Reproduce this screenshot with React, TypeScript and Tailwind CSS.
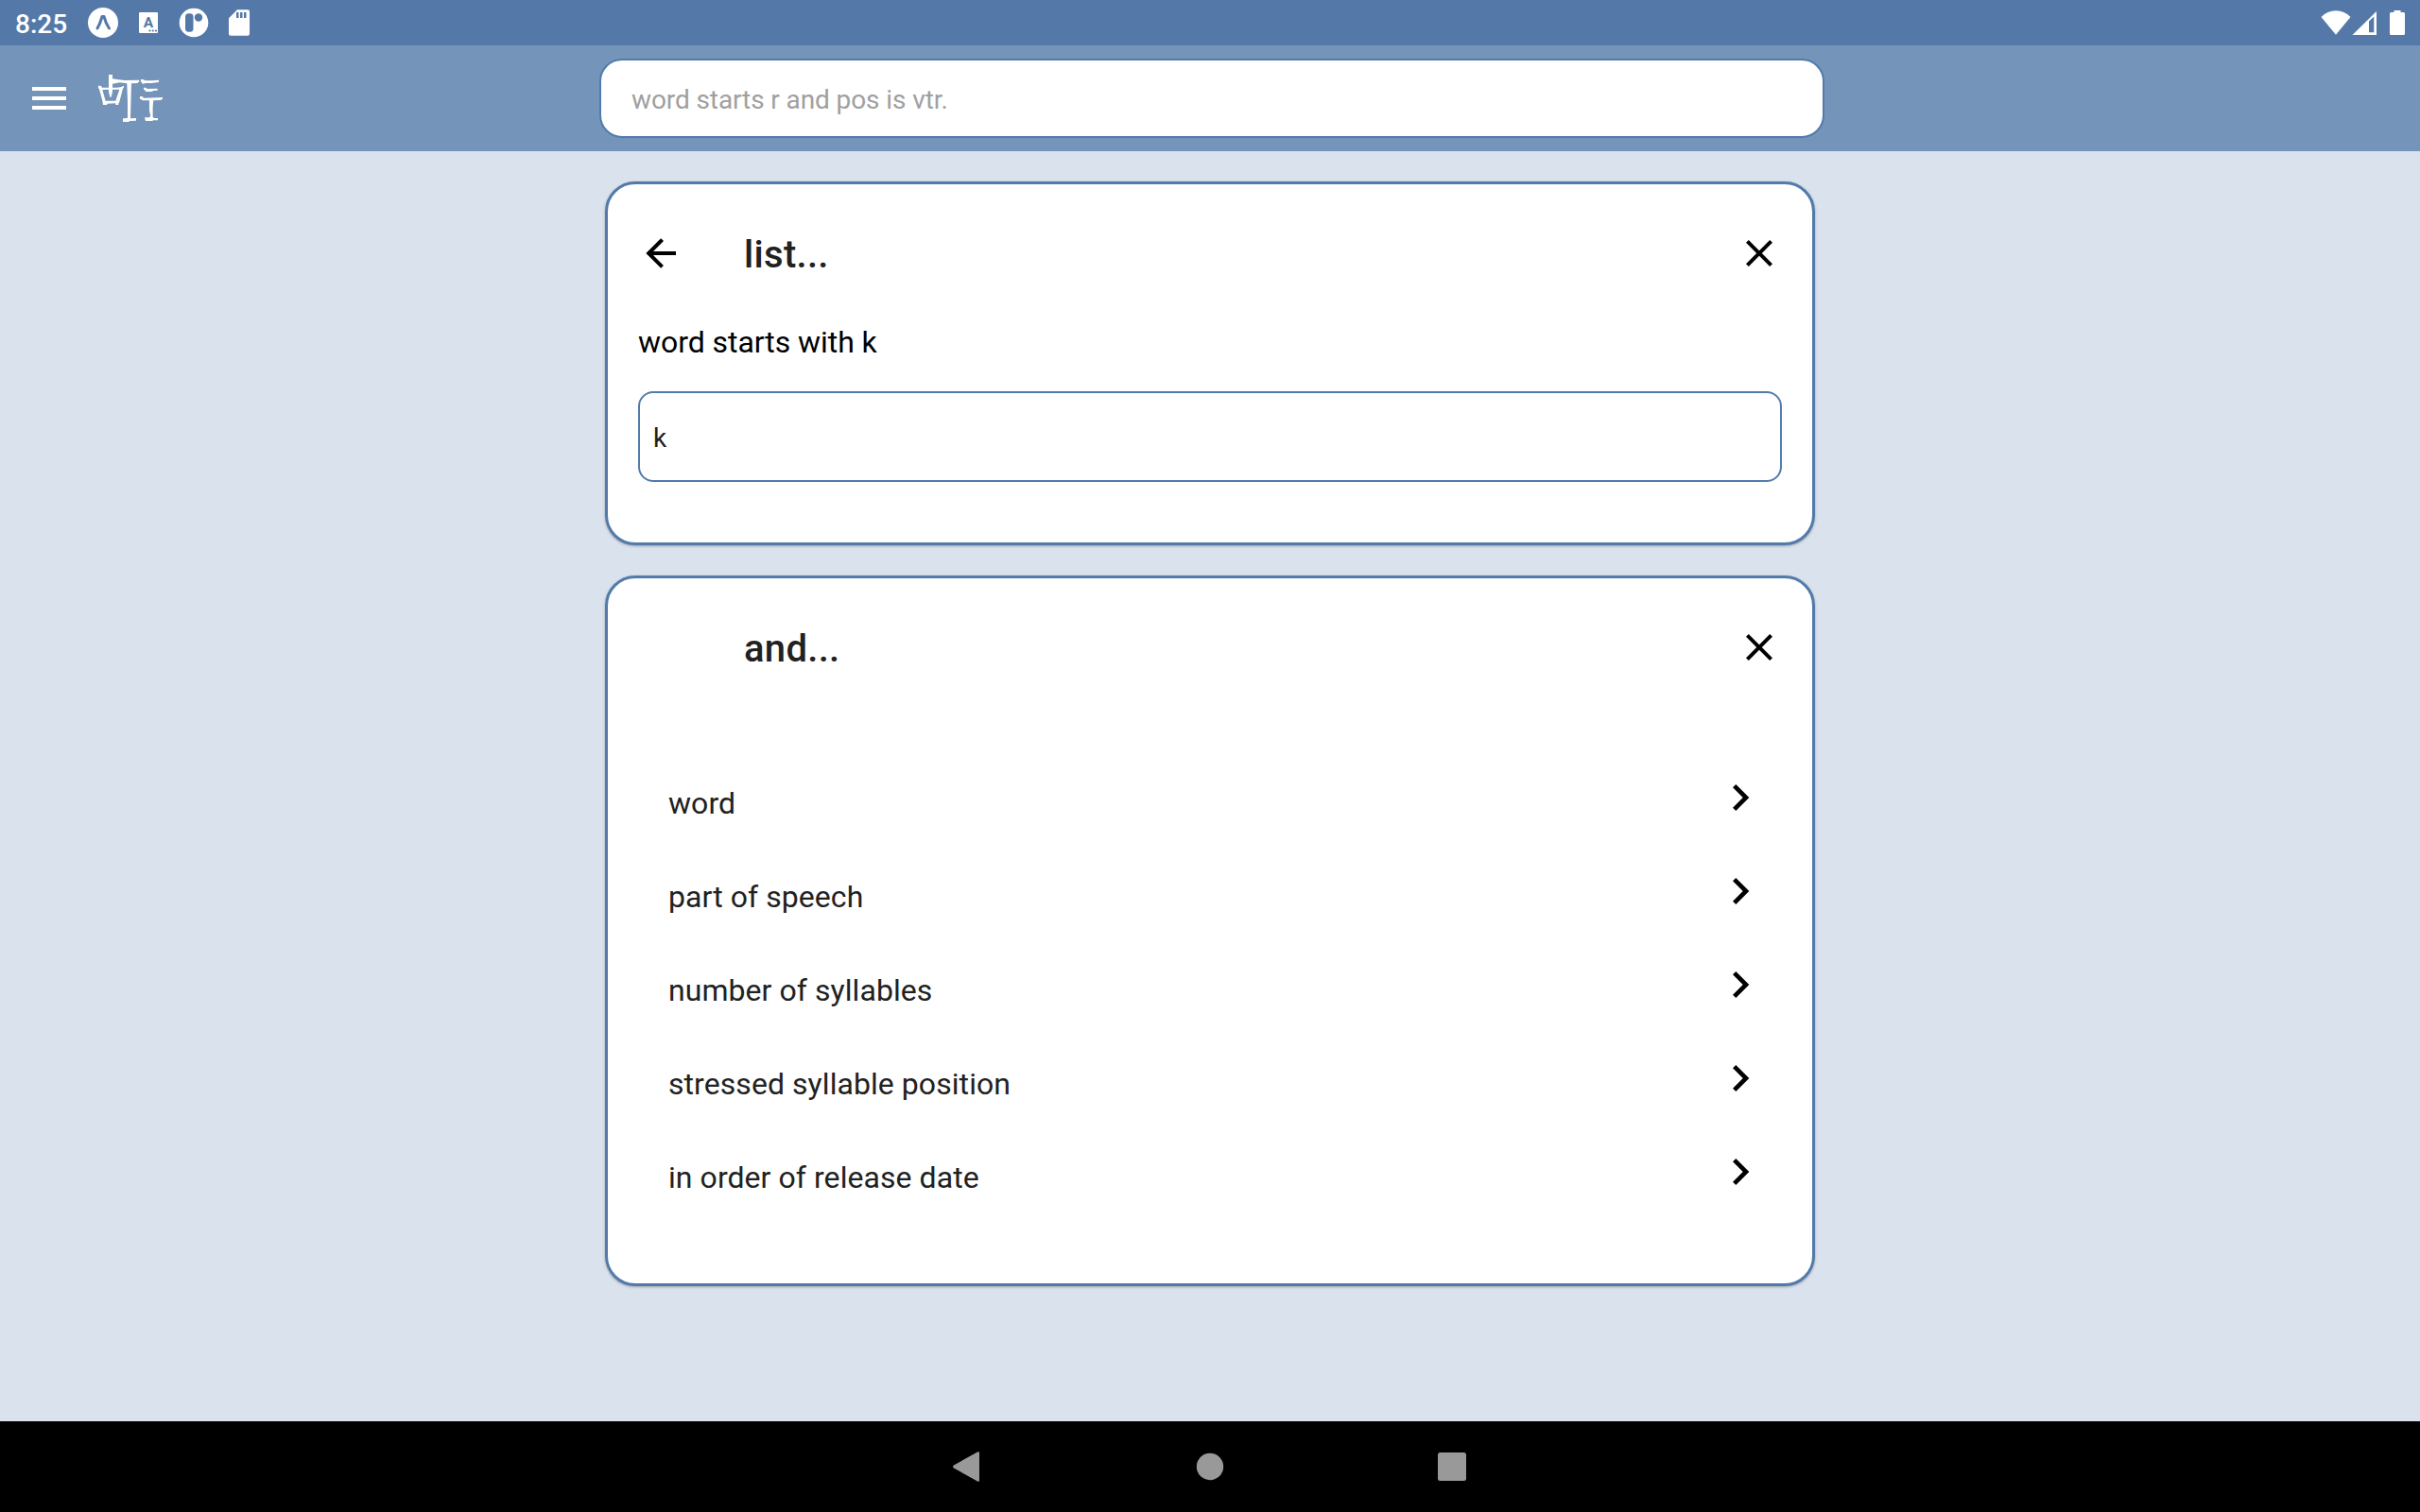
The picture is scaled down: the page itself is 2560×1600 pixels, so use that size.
import React from "react";

const CLOSE = "M19,6.41L17.59,5L12,10.59L6.41,5L5,6.41L10.59,12L5,17.59L6.41,19L12,13.41L17.59,19L19,17.59L13.41,12L19,6.41Z";
const BACK = "M20,11V13H8L13.5,18.5L12.08,19.92L4.16,12L12.08,4.08L13.5,5.5L8,11H20Z";
const CHEVRON = "M8.59,16.58L13.17,12L8.59,7.41L10,6L16,12L10,18L8.59,16.58Z";

function Icon({ d, className }: { d: string; className: string }) {
  return (
    <svg viewBox="0 0 24 24" className={className} fill="currentColor">
      <path d={d} />
    </svg>
  );
}

function StatusBar() {
  return (
    <div className="flex h-12 shrink-0 items-center justify-between bg-[#5479a9] text-white">
      <div className="flex h-12 items-center pl-4">
        <span className="w-[77px] pt-[4px] text-[28px] leading-[48px] font-medium">8:25</span>
        <svg viewBox="0 0 180 48" className="h-12 w-[180px]" fill="#fff">
          <circle cx="16" cy="24" r="16" />
          <path d="M10 30Q13 25 15 17.500H17Q19 25 22.500 30" fill="none" stroke="#5479a9" strokeWidth="3" strokeLinecap="round" strokeLinejoin="round" />
          <rect x="54" y="13" width="20" height="22" rx="1" />
          <text x="64" y="29.300" textAnchor="middle" fontSize="15.500" fontWeight="700" fill="#5479a9">A</text>
          <g fill="#5479a9">
            <circle cx="65.500" cy="32.500" r="1.100" />
            <circle cx="68.800" cy="32.500" r="1.100" />
            <circle cx="72" cy="32.500" r="1.100" />
          </g>
          <circle cx="112" cy="24" r="15.300" />
          <rect x="103" y="14.300" width="8.500" height="19.500" rx="3.500" fill="#5479a9" />
          <circle cx="117" cy="18.500" r="4.200" fill="#5479a9" />
          <path d="M158 10.300H169Q171 10.300 171 12.300V35.700Q171 37.700 169 37.700H151Q149 37.700 149 35.700V19.300Z" />
          <path d="M157 13H159.500V19H157ZM161 13H163.500V19H161ZM165 13H167.500V19H165Z" fill="#5479a9" />
        </svg>
      </div>
      <svg viewBox="0 0 140 48" className="h-12 w-[140px]" fill="#fff">
        <path d="M35.500 18Q42 11.300 51 11.300Q60 11.300 66.500 18L51 36.700Z" />
        <path fillRule="evenodd" d="M94 12V37H68.500ZM86 22.500V34.300H91.300V17.500Z" />
        <path d="M112.500 11H119.500V13H122.500Q124 13 124 14.500V35.500Q124 37 122.500 37H109.500Q108 37 108 35.500V14.500Q108 13 109.500 13H112.500Z" />
      </svg>
    </div>
  );
}

function Logo() {
  return (
    <svg viewBox="309 234 208 156" className="ml-[33px] h-[52px] w-[69.300px]" fill="#fff">
      <path d="M345 237H357V250L372 252L395 255L442 254V259L436 264L417 265L416 300L414 376L432 375V383L410 384V387H390V376L405 375L405 320L403 265L380 262L357 266V278H372L385 276L393 272V278L390 281L378 327H376V333H367V328L340 329V333H327L325 320L318 294L315 283L312 280V272H320L324 278H345ZM325 285L335 320H367L379 284H357V292L353 308H349L345 292V284Z" />
      <path d="M447 252H453L462 256H482L504 254V261L480 264H462L454 266L450 264V260H447Z" />
      <path d="M456 278H462L468 282L500 281V287L487 288L482 291H462L460 286L456 284Z" />
      <path d="M444 306H452L456 311L500 310L516 309V315H512V318L487 319L485 340V372L490 375H501V382H485V384H462L459 373H474L478 368L474 350V319H452L449 316L444 314Z" />
    </svg>
  );
}

function AppBar() {
  return (
    <div className="flex h-28 shrink-0 items-center bg-[#7594b9]">
      <div className="flex w-[634px] items-center pl-[34px]">
        <div className="flex w-9 flex-col gap-[6px]">
          <div className="h-1 bg-white" />
          <div className="h-1 bg-white" />
          <div className="h-1 bg-white" />
        </div>
        <Logo />
      </div>
      <div className="flex h-[84px] w-[1296px] items-center rounded-[24px] border-2 border-[#527bab] bg-white pl-8 text-[28px] tracking-[-0.100px] text-[#a0a0a0]">
        <span className="pt-[3px]">word starts r and pos is vtr.</span>
      </div>
    </div>
  );
}

function Card({ title, back, className, children }: { title: string; back?: boolean; className: string; children: React.ReactNode }) {
  return (
    <section className={`${className} w-[1280px] rounded-[32px] border-[3px] border-[#527bab] bg-white px-8 pt-[33px] shadow-[0_1px_3px_rgba(0,0,0,0.3)]`}>
      <header className="flex h-20 items-center text-black">
        <div className="w-28">{back && <Icon d={BACK} className="h-12 w-12" />}</div>
        <h1 className="flex-1 pt-[4px] text-[40px] leading-[48px] font-medium tracking-[0.300px] text-[#212121]">{title}</h1>
        <Icon d={CLOSE} className="h-12 w-12" />
      </header>
      {children}
    </section>
  );
}

const OPTIONS = ["word", "part of speech", "number of syllables", "stressed syllable position", "in order of release date"];

function NavBar() {
  return (
    <div className="flex h-24 shrink-0 items-center justify-center bg-black">
      <svg viewBox="0 0 544 32" className="h-8 w-[544px]" fill="#999">
        <path d="M26 0.500Q28 -0.500 28 1.500V30.500Q28 32.500 26 31.500L1 17.500Q-1 16 1 14.500Z" />
        <circle cx="272" cy="16" r="14.200" />
        <rect x="513" y="1" width="30" height="30" rx="2.500" />
      </svg>
    </div>
  );
}

export default function App() {
  return (
    <div className="flex h-[1600px] w-[2560px] flex-col overflow-hidden bg-[#dae2ed] font-['Roboto',sans-serif]">
      <StatusBar />
      <AppBar />
      <main className="flex flex-1 flex-col items-center gap-8 pt-8">
        <Card title="list..." back className="h-[385px]">
          <p className="mt-[34px] text-[32px] leading-10 tracking-[-0.060px] text-black">word starts with k</p>
          <div className="mt-8 flex h-24 items-center rounded-[16px] border-2 border-[#527bab] pt-[3px] pl-[14px] text-[28px] text-[#212121]">k</div>
        </Card>
        <Card title="and..." className="h-[752px]">
          <ul className="mt-[91px]">
            {OPTIONS.map((o) => (
              <li key={o} className="flex h-[99px] items-start justify-between pr-4 pl-8">
                <span className="mt-[10px] text-[32px] leading-12 tracking-[0.060px] text-[#212121]">{o}</span>
                <Icon d={CHEVRON} className="h-14 w-14 text-black" />
              </li>
            ))}
          </ul>
        </Card>
      </main>
      <NavBar />
    </div>
  );
}
